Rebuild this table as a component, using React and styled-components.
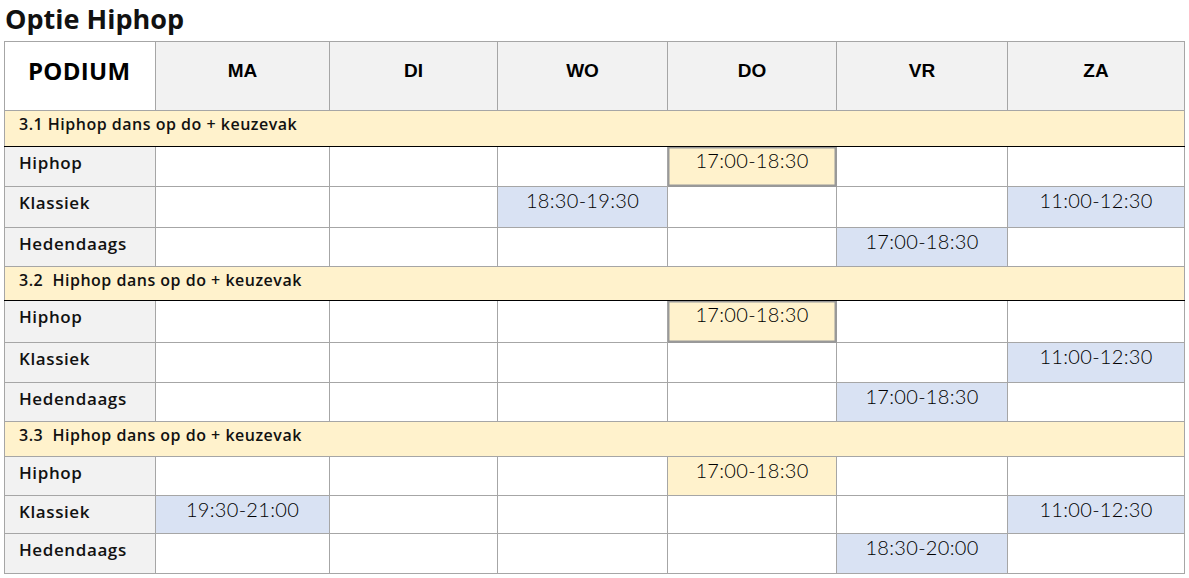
import styled, { createGlobalStyle } from "styled-components";

const GlobalStyle = createGlobalStyle`
  body {
    margin: 0;
    background: #ffffff;
    font-family: "Open Sans", "Liberation Sans", sans-serif;
    color: #111;
  }
`;

const days = ["MA", "DI", "WO", "DO", "VR", "ZA"];
const widths = [151, 174, 168, 170, 169, 171, 177];

const sections = [
  {
    title: "3.1 Hiphop dans op do + keuzevak",
    height: 36,
    strongBottom: true,
    rows: [
      { name: "Hiphop", height: 40, cells: { DO: { t: "17:00-18:30", tone: "yellow", framed: true } } },
      {
        name: "Klassiek",
        height: 41,
        cells: { WO: { t: "18:30-19:30", tone: "blue" }, ZA: { t: "11:00-12:30", tone: "blue" } },
      },
      { name: "Hedendaags", height: 39, cells: { VR: { t: "17:00-18:30", tone: "blue" } } },
    ],
  },
  {
    title: "3.2  Hiphop dans op do + keuzevak",
    height: 34,
    strongBottom: true,
    rows: [
      { name: "Hiphop", height: 42, cells: { DO: { t: "17:00-18:30", tone: "yellow", framed: true } } },
      { name: "Klassiek", height: 40, cells: { ZA: { t: "11:00-12:30", tone: "blue" } } },
      { name: "Hedendaags", height: 39, cells: { VR: { t: "17:00-18:30", tone: "blue" } } },
    ],
  },
  {
    title: "3.3  Hiphop dans op do + keuzevak",
    height: 35,
    rows: [
      { name: "Hiphop", height: 39, cells: { DO: { t: "17:00-18:30", tone: "yellow" } } },
      {
        name: "Klassiek",
        height: 38,
        cells: { MA: { t: "19:30-21:00", tone: "blue" }, ZA: { t: "11:00-12:30", tone: "blue" } },
      },
      { name: "Hedendaags", height: 40, cells: { VR: { t: "18:30-20:00", tone: "blue" } } },
    ],
  },
];

const tones = {
  yellow: "#fff2cc",
  blue: "#d9e2f3",
};

const App = () => {
  return (
    <Page>
      <GlobalStyle />
      <Title>Optie Hiphop</Title>
      <Schedule>
        <colgroup>
          {widths.map((w, i) => (
            <col key={i} style={{ width: w }} />
          ))}
        </colgroup>
        <thead>
          <HeadRow>
            <PodiumHead>PODIUM</PodiumHead>
            {days.map((d) => (
              <DayHead key={d}>{d}</DayHead>
            ))}
          </HeadRow>
        </thead>
        <tbody>
          {sections.map((s) => (
            <Section key={s.title} section={s} />
          ))}
        </tbody>
      </Schedule>
    </Page>
  );
};

const Section = ({ section }) => (
  <>
    <SectionRow $height={section.height}>
      <SectionCell colSpan={7} $strong={section.strongBottom}>
        {section.title}
      </SectionCell>
    </SectionRow>
    {section.rows.map((r) => (
      <DataRow key={r.name} $height={r.height}>
        <Label>{r.name}</Label>
        {days.map((d) => {
          const c = r.cells[d];
          return (
            <TimeCell key={d} $tone={c && c.tone} $framed={c && c.framed}>
              {c ? c.t : ""}
            </TimeCell>
          );
        })}
      </DataRow>
    ))}
  </>
);

const Page = styled.div`
  padding: 2px 4px 0 4px;
`;

const Title = styled.h1`
  margin: 0 0 5px 1px;
  font-size: 27px;
  line-height: 34px;
  font-weight: 700;
  letter-spacing: 0;
  color: #111;
`;

const Schedule = styled.table`
  border-collapse: collapse;
  table-layout: fixed;
  width: 1180px;
  border: 1px solid #a6a6a6;
`;

const HeadRow = styled.tr`
  height: 69px;
`;

const PodiumHead = styled.th`
  background: #ffffff;
  border: 1px solid #a6a6a6;
  padding: 0 0 12px 23px;
  vertical-align: middle;
  text-align: left;
  font-size: 24px;
  font-weight: 700;
  letter-spacing: 0.3px;
  color: #000;
`;

const DayHead = styled.th`
  background: #f2f2f2;
  border: 1px solid #a6a6a6;
  padding: 0 0 10px 0;
  vertical-align: middle;
  text-align: center;
  font-family: "Liberation Sans", Arial, sans-serif;
  font-size: 19px;
  font-weight: 700;
  color: #000;
`;

const SectionRow = styled.tr`
  height: ${(p) => p.$height}px;
`;

const SectionCell = styled.td`
  background: #fff2cc;
  border: 1px solid #a6a6a6;
  border-bottom: 1px solid ${(p) => (p.$strong ? "#000" : "#a6a6a6")};
  padding: 2px 0 0 14px;
  vertical-align: top;
  font-size: 16px;
  font-weight: 600;
  letter-spacing: 0.5px;
  white-space: pre;
  color: #111;
`;

const DataRow = styled.tr`
  height: ${(p) => p.$height}px;
`;

const Label = styled.td`
  background: #f2f2f2;
  border: 1px solid #a6a6a6;
  vertical-align: top;
  padding: 4px 0 0 14px;
  font-size: 17px;
  font-weight: 600;
  letter-spacing: 0.6px;
  color: #111;
`;

const TimeCell = styled.td`
  background: ${(p) => (p.$tone ? tones[p.$tone] : "#ffffff")};
  border: 1px solid ${(p) => (p.$framed ? "#999999" : "#a6a6a6")};
  box-shadow: ${(p) => (p.$framed ? "inset 0 0 0 1.5px #999999" : "none")};
  vertical-align: top;
  padding: 1px 0 0 0;
  text-align: center;
  font-family: "Lato", "Noto Sans", sans-serif;
  font-size: 20px;
  font-weight: 300;
  letter-spacing: 0.3px;
  color: #000;
`;

export default App;
